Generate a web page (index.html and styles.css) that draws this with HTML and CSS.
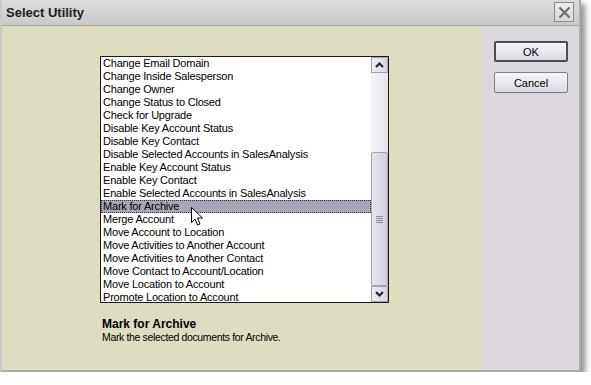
FILE: index.html
```html
<!DOCTYPE html>
<html lang="en">
<head>
  <meta charset="UTF-8" />
  <title>Select Utility</title>
  <link rel="stylesheet" href="styles.css">
</head>
<body>
  <div class="window">
    <div class="titlebar">
      <span class="title">Select Utility</span>
      <button class="close" aria-label="Close">
        <svg width="13" height="13" viewBox="0 0 13 13">
          <path d="M1.5 1.5 L11.5 11.5 M11.5 1.5 L1.5 11.5" stroke="#6c6c6c" stroke-width="2" fill="none" />
        </svg>
      </button>
    </div>

    <div class="content">
      <div class="main">
        <div class="listbox">
          <ul class="items">
            <li>Change Email Domain</li>
            <li>Change Inside Salesperson</li>
            <li>Change Owner</li>
            <li>Change Status to Closed</li>
            <li>Check for Upgrade</li>
            <li>Disable Key Account Status</li>
            <li>Disable Key Contact</li>
            <li>Disable Selected Accounts in SalesAnalysis</li>
            <li>Enable Key Account Status</li>
            <li>Enable Key Contact</li>
            <li>Enable Selected Accounts in SalesAnalysis</li>
            <li class="selected">Mark for Archive</li>
            <li>Merge Account</li>
            <li>Move Account to Location</li>
            <li>Move Activities to Another Account</li>
            <li>Move Activities to Another Contact</li>
            <li>Move Contact to Account/Location</li>
            <li>Move Location to Account</li>
            <li>Promote Location to Account</li>
          </ul>
          <div class="scrollbar">
            <div class="sb-btn">
              <svg width="9" height="6" viewBox="0 0 9 6"><path d="M1 5 L4.5 1.5 L8 5" stroke="#222" stroke-width="2" fill="none" /></svg>
            </div>
            <div class="track">
              <div class="thumb">
                <span class="grip"></span>
              </div>
            </div>
            <div class="sb-btn">
              <svg width="9" height="6" viewBox="0 0 9 6"><path d="M1 1 L4.5 4.5 L8 1" stroke="#222" stroke-width="2" fill="none" /></svg>
            </div>
          </div>
        </div>

        <div class="desc">
          <div class="desc-title">Mark for Archive</div>
          <div class="desc-text">Mark the selected documents for Archive.</div>
        </div>

        <svg class="cursor" width="13" height="20" viewBox="0 0 13 20">
          <path d="M0.5 0.5 L0.5 15.5 L4 12 L6.5 18 L9 17 L6.5 11 L11.5 11 Z" fill="#fff" stroke="#000" stroke-width="1" />
        </svg>
      </div>

      <div class="side">
        <button class="btn default">OK</button>
        <button class="btn">Cancel</button>
      </div>
    </div>
  </div>
</body>
</html>
```

FILE: styles.css
```css
* {
  box-sizing: border-box;
}

body {
  margin: 0;
  background: #fff;
  font-family: "Liberation Sans", Arial, sans-serif;
  color: #000;
}

.window {
  width: 581px;
  height: 372px;
  display: flex;
  flex-direction: column;
  border-left: 2px solid #c9c9ce;
  border-right: 2px solid #a9a9ad;
  border-bottom: 2px solid #a9a9ad;
  box-shadow: 4px 4px 6px rgba(0, 0, 0, 0.45);
}

.titlebar {
  height: 26px;
  display: flex;
  align-items: center;
  justify-content: space-between;
  padding: 0 5px 1px 4px;
  background: linear-gradient(#dcdcdc, #c9c9c9);
  border-bottom: 1px solid #a8a8a8;
}

.title {
  font-weight: bold;
  font-size: 13px;
  color: #1e1e1e;
}

.close {
  width: 20px;
  height: 20px;
  padding: 0;
  display: flex;
  align-items: center;
  justify-content: center;
  background: linear-gradient(#ececec, #d6d6d6);
  border: 1px solid #8e8e8e;
}

.content {
  flex: 1;
  display: flex;
}

.main {
  position: relative;
  width: 480px;
  background: #dfddc1;
  padding: 30px 0 0 98px;
}

.listbox {
  width: 289px;
  height: 247px;
  display: flex;
  background: #fff;
  border: 1px solid #1a1a1a;
}

.items {
  flex: 1;
  list-style: none;
  margin: 0;
  padding: 0;
  overflow: hidden;
  font-size: 11px;
  letter-spacing: -0.2px;
}

.items li {
  height: 13px;
  line-height: 13px;
  padding-left: 2px;
  white-space: nowrap;
}

.items li.selected {
  background: #a7a6b6;
  outline: 1px dotted #333;
  outline-offset: -1px;
}

.scrollbar {
  width: 17px;
  display: flex;
  flex-direction: column;
}

.sb-btn {
  height: 16px;
  display: flex;
  align-items: center;
  justify-content: center;
  background: linear-gradient(90deg, #ececf2, #d6d6e2);
  border: 1px solid #a3a3b3;
}

.track {
  flex: 1;
  display: flex;
  flex-direction: column;
  justify-content: flex-end;
  background: linear-gradient(90deg, #f4f4f7, #e4e4ec);
}

.thumb {
  height: 134px;
  display: flex;
  align-items: center;
  justify-content: center;
  background: linear-gradient(90deg, #e6e6ee, #cfcfdc);
  border: 1px solid #a3a3b3;
  border-radius: 2px;
}

.grip {
  width: 7px;
  height: 7px;
  background: repeating-linear-gradient(#8a8a9a 0 1px, transparent 1px 2px);
}

.desc {
  margin-top: 15px;
  font-size: 10.5px;
  letter-spacing: -0.35px;
  line-height: 13px;
  padding-left: 2px;
}

.desc-title {
  font-weight: bold;
  font-size: 12px;
  letter-spacing: 0;
}

.cursor {
  position: absolute;
  left: 189px;
  top: 181px;
}

.side {
  flex: 1;
  background: #dcd6de;
  display: flex;
  flex-direction: column;
  align-items: center;
  gap: 10px;
  padding: 15px 0 0 1px;
}

.btn {
  width: 74px;
  height: 21px;
  padding: 0;
  font-family: "Liberation Sans", Arial, sans-serif;
  font-size: 11px;
  color: #000;
  background: linear-gradient(#f6f6f8, #d9d9e2);
  border: 1px solid #7f7f8c;
  border-radius: 2px;
}

.btn.default {
  border: 2px solid #4c4c58;
}
```
